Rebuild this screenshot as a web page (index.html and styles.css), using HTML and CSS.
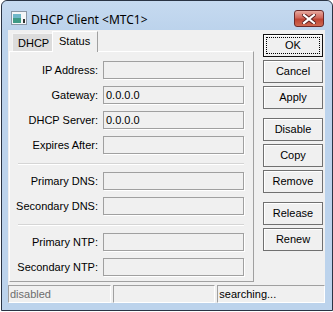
FILE: index.html
```html
<!DOCTYPE html>
<html lang="en">
<head>
  <meta charset="UTF-8">
  <title>DHCP Client &lt;MTC1&gt;</title>
  <link rel="stylesheet" href="styles.css">
</head>
<body>
  <div class="window">
    <div class="titlebar">
      <svg class="app-icon" width="16" height="14" viewBox="0 0 16 14">
        <rect x="0.5" y="0.5" width="15" height="13" fill="#f4f6f8" stroke="#8a97a6"/>
        <rect x="2" y="3" width="8" height="9" fill="#3e9a86"/>
        <rect x="2" y="3" width="8" height="4" fill="#6fb7c9"/>
        <rect x="12" y="8" width="2" height="4" fill="#333"/>
      </svg>
      <span class="title">DHCP Client &lt;MTC1&gt;</span>
      <div class="close-btn">
        <svg width="14" height="10" viewBox="0 0 14 10">
          <path d="M2 1 L12 9 M12 1 L2 9" stroke="#5a2020" stroke-width="4" stroke-linecap="square"/>
          <path d="M2 1 L12 9 M12 1 L2 9" stroke="#fff" stroke-width="2.2" stroke-linecap="square"/>
        </svg>
      </div>
    </div>
    <div class="client">
      <div class="main">
        <div class="tabs-area">
          <div class="tabs">
            <div class="tab">DHCP</div>
            <div class="tab active">Status</div>
          </div>
          <div class="panel">
            <div class="form-grid">
              <span class="label">IP Address:</span><div class="field"></div>
              <span class="label">Gateway:</span><div class="field">0.0.0.0</div>
              <span class="label">DHCP Server:</span><div class="field">0.0.0.0</div>
              <span class="label">Expires After:</span><div class="field"></div>
              <div class="sep"></div>
              <span class="label">Primary DNS:</span><div class="field"></div>
              <span class="label">Secondary DNS:</span><div class="field"></div>
              <div class="sep"></div>
              <span class="label">Primary NTP:</span><div class="field"></div>
              <span class="label">Secondary NTP:</span><div class="field"></div>
            </div>
          </div>
        </div>
        <div class="buttons">
          <div class="btn default">OK</div>
          <div class="btn">Cancel</div>
          <div class="btn">Apply</div>
          <div class="btn group">Disable</div>
          <div class="btn">Copy</div>
          <div class="btn">Remove</div>
          <div class="btn group">Release</div>
          <div class="btn">Renew</div>
        </div>
      </div>
      <div class="statusbar">
        <div class="cell muted">disabled</div>
        <div class="cell"></div>
        <div class="cell wide">searching...</div>
      </div>
    </div>
  </div>
</body>
</html>
```

FILE: styles.css
```css
body {
  margin: 0;
  background-color: #fff;
  font-family: "Liberation Sans", Arial, sans-serif;
  font-size: 11px;
  color: #000;
}
.window {
  box-sizing: border-box;
  width: 332px;
  height: 311px;
  margin-left: 1px;
  border: 1px solid #2a3444;
  border-radius: 6px 6px 0 0;
  background-color: #bcd3ec;
}
.titlebar {
  display: flex;
  align-items: flex-start;
  height: 29px;
  padding: 10px 0 0 9px;
  box-sizing: border-box;
  background: linear-gradient(#c6daf0, #bcd3ec);
  border-radius: 6px 6px 0 0;
}
.title {
  margin-left: 4px;
  margin-top: 1px;
  font-family: "Noto Sans", "Open Sans", sans-serif;
  font-size: 12px;
  line-height: 15px;
}
.close-btn {
  margin-left: auto;
  margin-right: 8px;
  margin-top: -1px;
  width: 30px;
  height: 17px;
  box-sizing: border-box;
  border: 1px solid #6b2a2a;
  border-radius: 3px;
  background: linear-gradient(#e8a99f, #d0675b 45%, #bf4433 55%, #cf6a52);
  display: flex;
  align-items: center;
  justify-content: center;
}
.client {
  width: 317px;
  height: 273px;
  margin-left: 6px;
  background-color: #f0f0f0;
  display: flex;
  flex-direction: column;
}
.main {
  display: flex;
  padding: 1px 0 0 1px;
  height: 254px;
  box-sizing: border-box;
}
.tabs-area {
  width: 245px;
}
.tabs {
  display: flex;
  align-items: flex-end;
  height: 20px;
  padding-left: 3px;
}
.tab {
  box-sizing: border-box;
  width: 40px;
  height: 18px;
  padding: 3px 0 0 5px;
  background-color: #dcdcdc;
  border-top: 1px solid #f4f4f4;
  border-left: 1px solid #f4f4f4;
}
.tab.active {
  width: 46px;
  height: 21px;
  margin-bottom: -1px;
  padding: 3px 0 0 6px;
  background-color: #f0f0f0;
  border-top: 1px solid #fff;
  border-left: 1px solid #fff;
  border-right: 1px solid #a0a0a0;
  position: relative;
}
.panel {
  box-sizing: border-box;
  height: 231px;
  padding-top: 9px;
  border-top: 1px solid #fff;
  border-left: 1px solid #fff;
  border-right: 1px solid #a0a0a0;
  border-bottom: 1px solid #a0a0a0;
}
.form-grid {
  display: grid;
  grid-template-columns: 88px 141px;
  column-gap: 5px;
  row-gap: 7px;
}
.label {
  height: 18px;
  text-align: right;
  line-height: 18px;
}
.field {
  box-sizing: border-box;
  height: 18px;
  border: 1px solid #a0a0a0;
  box-shadow: 1px 1px 0 #fff;
  padding-left: 2px;
  line-height: 16px;
}
.sep {
  grid-column: 1 / -1;
  height: 1px;
  margin: 2px 0 1px 8px;
  background-color: #d5d5d5;
  box-shadow: 0 1px 0 #fff;
}
.buttons {
  display: flex;
  flex-direction: column;
  gap: 3px;
  margin-left: 9px;
  padding-top: 3px;
}
.btn {
  box-sizing: border-box;
  width: 60px;
  height: 23px;
  border: 1px solid #707070;
  box-shadow: inset 1px 1px 0 #fff;
  background-color: #f0f0f0;
  text-align: center;
  line-height: 21px;
}
.btn.group {
  margin-top: 6px;
}
.btn.default {
  border-color: #111;
  position: relative;
}
.btn.default::after {
  content: "";
  position: absolute;
  top: 2px;
  left: 2px;
  right: 2px;
  bottom: 2px;
  border: 1px dotted #000;
}
.statusbar {
  display: flex;
  gap: 2px;
  height: 18px;
  margin-top: 1px;
}
.cell {
  box-sizing: border-box;
  width: 103px;
  height: 18px;
  border-top: 1px solid #a0a0a0;
  border-left: 1px solid #a0a0a0;
  border-right: 1px solid #fff;
  border-bottom: 1px solid #fff;
  line-height: 16px;
  padding-left: 1px;
}
.cell.muted {
  color: #6d6d6d;
}
.cell.wide {
  width: 108px;
}
```
